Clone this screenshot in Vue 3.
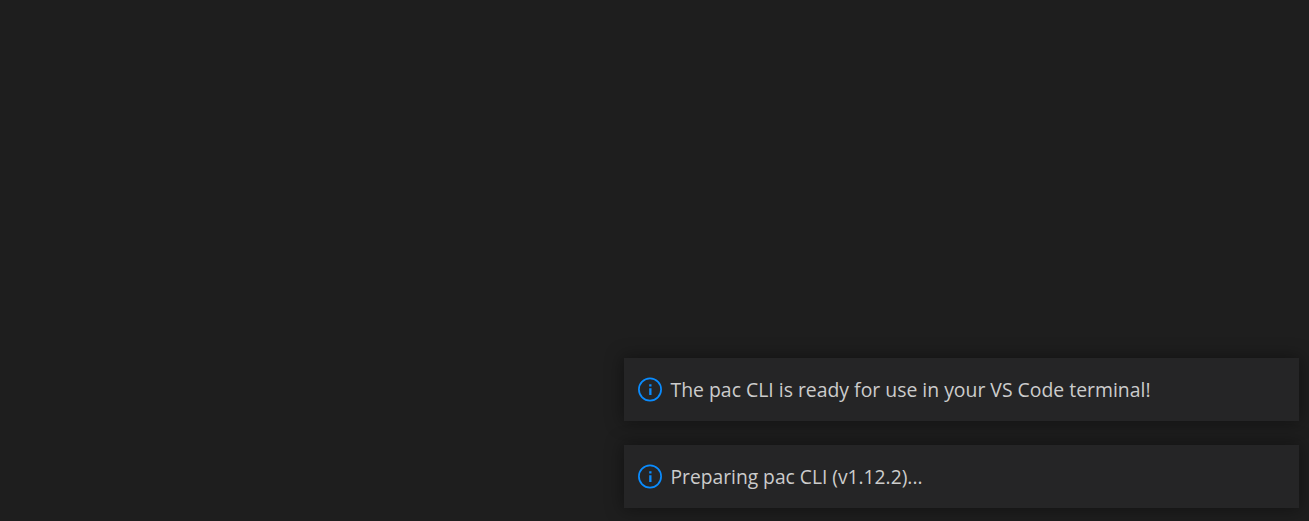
<script setup>
const notices = [
  { id: 1, text: 'The pac CLI is ready for use in your VS Code terminal!', width: 480 },
  { id: 2, text: 'Preparing pac CLI (v1.12.2)...', width: 252 }
]
</script>

<template>
  <main class="workbench">
    <section class="toasts">
      <article v-for="n in notices" :key="n.id" class="toast">
        <svg class="icon" width="24" height="25" viewBox="0 0 24 25" fill="none">
          <circle cx="12" cy="12.5" r="11.1" stroke="#0a8cff" stroke-width="1.7" />
          <path d="M11.2 7.2h2.3v2.2h-2.3zM11.2 11.3h2.3V18h-2.3z" fill="#0a8cff" />
        </svg>
        <svg class="message" :width="n.width + 10" height="31">
          <text x="0.5" y="23" :textLength="n.width" lengthAdjust="spacingAndGlyphs">{{ n.text }}</text>
        </svg>
      </article>
    </section>
  </main>
</template>

<style scoped>
.workbench {
  box-sizing: border-box;
  height: 521px;
  padding: 0 10px 13px 0;
  display: flex;
  align-items: flex-end;
  justify-content: flex-end;
  overflow: hidden;
  background: #1e1e1e;
}
.toasts {
  width: 675px;
  display: flex;
  flex-direction: column;
  gap: 24px;
}
.toast {
  box-sizing: border-box;
  height: 63px;
  padding-left: 14px;
  display: flex;
  align-items: center;
  gap: 8px;
  background: #252526;
  box-shadow: 0 0 16px 2px rgba(0, 0, 0, 0.36);
}
.icon {
  flex: none;
}
.message {
  flex: none;
  overflow: visible;
  font: 19.5px "Open Sans", "Noto Sans", sans-serif;
  fill: #cccccc;
}
</style>

<style>
body {
  background: #1e1e1e;
}
</style>
